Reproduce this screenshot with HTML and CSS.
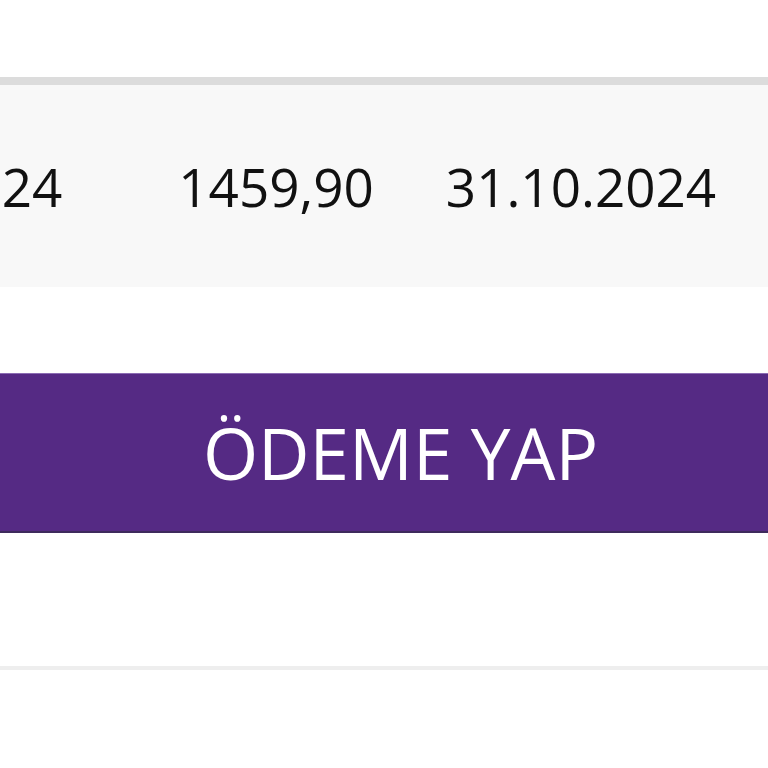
FILE: index.html
```html
<!DOCTYPE html>
<html lang="tr">
<head>
<meta charset="utf-8">
<title>Ödeme</title>
<link rel="stylesheet" href="styles.css">
</head>
<body>
<div class="page">
  <div class="table">
    <div class="row">
      <span class="cell c1">31.10.2024</span>
      <span class="cell c2">1459,90</span>
      <span class="cell c3">31.10.2024</span>
    </div>
  </div>
  <button class="pay">ÖDEME YAP</button>
  <div class="footer-line"></div>
</div>
</body>
</html>
```
FILE: styles.css
```css
html, body {
  margin: 0;
  padding: 0;
  background: #ffffff;
  overflow: hidden;
}
.page {
  width: 768px;
  height: 768px;
  padding-top: 77px;
  box-sizing: border-box;
  font-family: "Open Sans", "Noto Sans", sans-serif;
}
.table {
  border-top: 8px solid #dcdcdc;
}
.row {
  height: 202px;
  background: #f8f8f8;
  display: flex;
  align-items: center;
  white-space: nowrap;
  font-size: 53px;
  color: #111111;
  margin-left: -208px;
}
.cell {
  display: block;
  line-height: 1;
}
.c2 {
  margin-left: 116px;
}
.c3 {
  margin-left: 72px;
}
.pay {
  display: block;
  width: 100%;
  height: 160px;
  margin-top: 86px;
  border: 0;
  border-top: 1px solid #8b6bb3;
  border-bottom: 2px solid #3e2a5c;
  background: #552a84;
  color: #ffffff;
  font-family: "Open Sans", "Noto Sans", sans-serif;
  font-size: 71px;
  letter-spacing: 0;
  padding: 0;
  padding-left: 33px;
}
.footer-line {
  margin-top: 133px;
  height: 4px;
  background: #eeeeee;
}
```
